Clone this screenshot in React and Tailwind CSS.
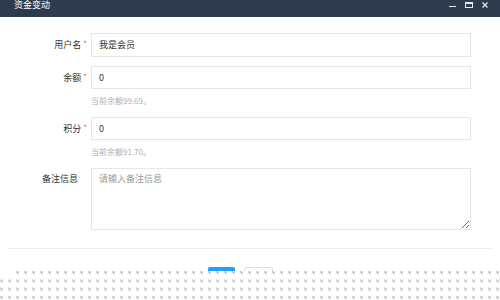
import React from "react";

function Row({ label, required, children }) {
  return (
    <div className="flex items-center">
      <div className="w-[91px] pr-[4px] text-right text-[9px] leading-[12px] text-[#333]">
        {label}
        {required && <span className="ml-[2px] text-[#ff5722] text-[8px] relative -top-[1px]">*</span>}
      </div>
      {children}
    </div>
  );
}

export default function App() {
  return (
    <div
      className="relative w-[500px] h-[300px] overflow-hidden bg-white"
      style={{ fontFamily: '"Noto Sans CJK SC", "Noto Sans", sans-serif' }}
    >
      <div className="flex h-[17px] items-start justify-between bg-[#2d3b4c] pl-[14px] pr-[12px]">
        <div className="-mt-[1px] text-[9px] leading-[11px] text-white">资金变动</div>
        <div className="flex items-start gap-[9px] pt-[1px]">
          <div className="mt-[5px] h-[1px] w-[7px] bg-[#e8ecf0]" />
          <div className="mt-[1px] h-[6px] w-[8px] border border-[#e8ecf0] border-t-[2px]" />
          <svg width="6" height="6" viewBox="0 0 6 6" className="mt-[1px]">
            <path d="M0.5 0.5L5.5 5.5M5.5 0.5L0.5 5.5" stroke="#e8ecf0" strokeWidth="1.2" />
          </svg>
        </div>
      </div>

      <div className="pt-[16px] pr-[29px]">
        <Row label="用户名" required>
          <div className="flex h-[24px] flex-1 items-center border border-[#e6e6e6] pl-[7px] text-[9px] text-[#333]">
            我是会员
          </div>
        </Row>
        <div className="mt-[9px]">
          <Row label="余额" required>
            <div className="flex h-[23px] flex-1 items-center border border-[#e6e6e6] pl-[7px] text-[9px] text-[#333]">
              0
            </div>
          </Row>
        </div>
        <div className="h-[28px] pl-[91px] pt-[6px] text-[8px] leading-[12px] text-[#b0b0b0]">当前余额99.69。</div>
        <Row label="积分" required>
          <div className="flex h-[23px] flex-1 items-center border border-[#e6e6e6] pl-[7px] text-[9px] text-[#333]">
            0
          </div>
        </Row>
        <div className="h-[28px] pl-[91px] pt-[6px] text-[8px] leading-[12px] text-[#b0b0b0]">当前余额91.70。</div>
        <div className="flex items-start">
          <div className="w-[91px] pr-[13px] pt-[5px] text-right text-[9px] leading-[12px] text-[#333]">备注信息</div>
          <textarea
            className="h-[62px] flex-1 border border-[#e6e6e6] px-[7px] pt-[4px] text-[9px] leading-[12px] text-[#333] outline-none placeholder:text-[#999]"
            placeholder="请输入备注信息"
          />
        </div>
      </div>

      <div className="mx-[8px] mt-[18px] border-t border-[#eeeeee]" />

      <div className="mt-[18px] flex pl-[208px] gap-[9px]">
        <div className="h-[24px] w-[27px] rounded-[2px] bg-[#1e9fff]" />
        <div className="h-[24px] w-[29px] rounded-[2px] border border-[#dedede] bg-white" />
      </div>

      <div className="absolute left-0 right-0 top-[271px] bottom-0 bg-white">
        <svg width="500" height="30" className="block">
          <defs>
            <pattern id="dots" width="8" height="8.3" patternUnits="userSpaceOnUse">
              <rect x="0" y="0" width="1" height="1" fill="#b5b5b5" />
              <rect x="1" y="1" width="1" height="1" fill="#7a7a7a" />
              <rect x="2" y="0" width="1" height="1" fill="#d0d0d0" />
              <rect x="0" y="2" width="1" height="1" fill="#d0d0d0" />
              <rect x="2" y="2" width="1" height="1" fill="#b5b5b5" />
            </pattern>
          </defs>
          <rect x="0" y="8.3" width="500" height="22" fill="url(#dots)" />
          <rect x="16" y="0" width="484" height="3" fill="url(#dots)" />
        </svg>
      </div>
    </div>
  );
}
